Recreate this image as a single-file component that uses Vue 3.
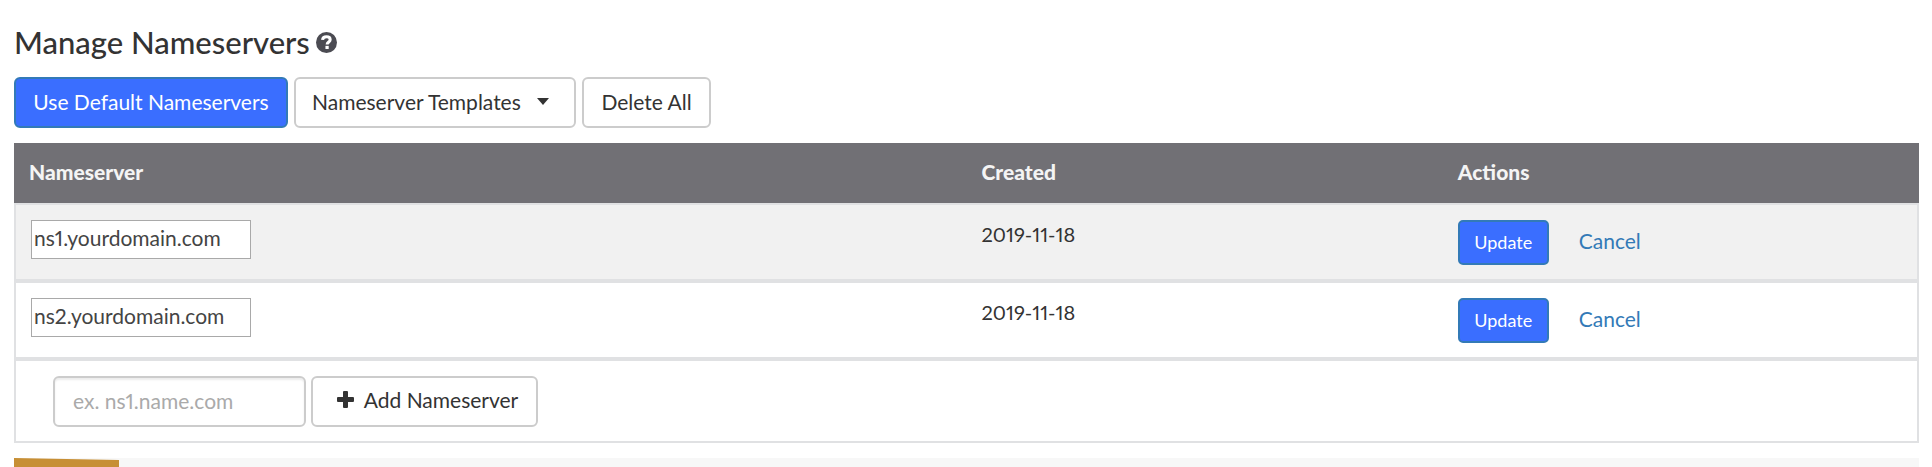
<script setup>
import { ref } from 'vue'

const rows = ref([
  { id: 1, host: 'ns1.yourdomain.com', created: '2019-11-18' },
  { id: 2, host: 'ns2.yourdomain.com', created: '2019-11-18' },
])
const newHost = ref('')
</script>

<template>
  <main class="page">
    <h1 class="title">
      Manage Nameservers
      <svg class="help" viewBox="0 0 20 20" role="img" aria-label="Help">
        <circle cx="10" cy="10" r="10" fill="#4b4b52" />
        <path
          d="M6.2 7.500C6.500 5.200 8.200 4.500 10 4.500c2.200 0 3.500 1.100 3.500 2.800 0 2.200-2.900 2.300-2.900 4.700"
          fill="none"
          stroke="#fff"
          stroke-width="2.900"
        />
        <rect x="9" y="13.200" width="3.100" height="3" fill="#fff" />
      </svg>
    </h1>

    <div class="toolbar">
      <button type="button" class="btn primary defaults">Use Default Nameservers</button>
      <button type="button" class="btn templates">
        Nameserver Templates
        <svg class="caret" viewBox="0 0 12 7" aria-hidden="true"><path d="M0 0h12L6 7z" fill="#333" /></svg>
      </button>
      <button type="button" class="btn delete">Delete All</button>
    </div>

    <table class="grid">
      <thead>
        <tr>
          <th class="wide" scope="col">Nameserver</th>
          <th scope="col">Created</th>
          <th scope="col">Actions</th>
        </tr>
      </thead>
      <tbody>
        <tr v-for="row in rows" :key="row.id" class="entry">
          <td><input v-model="row.host" class="host" type="text" aria-label="Nameserver" /></td>
          <td class="date">{{ row.created }}</td>
          <td>
            <div class="actions">
              <button type="button" class="btn primary small">Update</button>
              <a class="cancel" href="#">Cancel</a>
            </div>
          </td>
        </tr>
        <tr>
          <td colspan="3">
            <form class="add" @submit.prevent>
              <input v-model="newHost" class="new-host" type="text" placeholder="ex. ns1.name.com" aria-label="New nameserver" />
              <button type="submit" class="btn add-btn">
                <svg class="plus" viewBox="0 0 17 17" aria-hidden="true">
                  <path d="M7 0h3q1 0 1 1v5h5q1 0 1 1v3q0 1-1 1h-5v5q0 1-1 1H7q-1 0-1-1v-5H1q-1 0-1-1V7q0-1 1-1h5V1q0-1 1-1z" fill="#333" />
                </svg>
                Add Nameserver
              </button>
            </form>
          </td>
        </tr>
      </tbody>
    </table>

    <div class="strip"><div class="tab"></div></div>
  </main>
</template>

<style>
body {
  margin: 0;
  background: #fff;
}
</style>

<style scoped>
.page {
  padding: 23px 13px 0 14px;
  font-family: Lato, "Open Sans", sans-serif;
  font-size: 21px;
  line-height: 28px;
  font-variant-numeric: proportional-nums;
  color: #333;
}
.title {
  display: flex;
  align-items: center;
  gap: 6px;
  margin: 0 0 16px;
  font-size: 31px;
  font-weight: 500;
  line-height: 38px;
}
.help {
  width: 21px;
  height: 21px;
}
.toolbar {
  display: flex;
  gap: 6px;
  margin-bottom: 15px;
}
.btn {
  display: inline-flex;
  align-items: center;
  justify-content: center;
  box-sizing: border-box;
  height: 51px;
  padding: 0 16px 2px;
  border: 2px solid #ccc;
  border-radius: 6px;
  background: #fff;
  color: #333;
  font: inherit;
  white-space: nowrap;
}
.primary {
  border-color: #337ab7;
  background: #3a6eff;
  color: #fff;
}
.defaults {
  min-width: 274px;
}
.templates {
  min-width: 282px;
  justify-content: flex-start;
  gap: 16px;
}
.delete {
  min-width: 129px;
}
.caret {
  width: 12px;
  height: 7px;
}
.grid {
  width: 100%;
  table-layout: fixed;
  border-collapse: separate;
  border-spacing: 0;
}
.grid th {
  width: 25%;
  box-sizing: border-box;
  padding: 15px 15px 17px;
  background: #717075;
  color: #f4f4f4;
  font-weight: 900;
  text-align: left;
}
.grid th.wide {
  width: 50%;
}
.grid td {
  padding: 15px 15px 14px;
  border: 0 solid #e0e1e3;
  border-width: 2px 0;
  vertical-align: top;
}
.grid td:first-child {
  border-left-width: 2px;
}
.grid td:last-child {
  border-right-width: 2px;
}
.entry:nth-child(odd) td {
  background: #f1f1f1;
}
.grid .date {
  font-size: 20px;
}
.host {
  display: block;
  box-sizing: border-box;
  width: 220px;
  height: 39px;
  padding: 0 2px 4px;
  border: 1px solid #a9a9a9;
  background: #fff;
  color: #444;
  font: inherit;
  font-variant-numeric: inherit;
}
.actions {
  display: flex;
  align-items: center;
  gap: 30px;
}
.small {
  height: 45px;
  min-width: 91px;
  padding: 0 14px 2px;
  border-radius: 5px;
  font-size: 18px;
}
.cancel {
  padding-bottom: 3px;
  color: #337ab7;
  text-decoration: none;
}
.add {
  display: flex;
  gap: 5px;
  padding-left: 22px;
}
.new-host {
  box-sizing: border-box;
  width: 253px;
  height: 51px;
  padding: 0 18px 2px;
  border: 2px solid #ccc;
  border-radius: 6px;
  background: #fff;
  box-shadow: inset 0 2px 2px rgba(0, 0, 0, 0.08);
  color: #444;
  font: inherit;
  font-variant-numeric: inherit;
}
.new-host::placeholder {
  color: #aaa;
}
.add-btn {
  min-width: 227px;
  padding: 0 16px 4px 22px;
  gap: 10px;
}
.plus {
  width: 17px;
  height: 17px;
}
.strip {
  height: 9px;
  margin-top: 15px;
  background: #f7f7f7;
}
.tab {
  width: 105px;
  height: 9px;
  background: #c78f35;
  clip-path: polygon(0 0, 100% 2px, 100% 100%, 0 100%);
}
</style>
